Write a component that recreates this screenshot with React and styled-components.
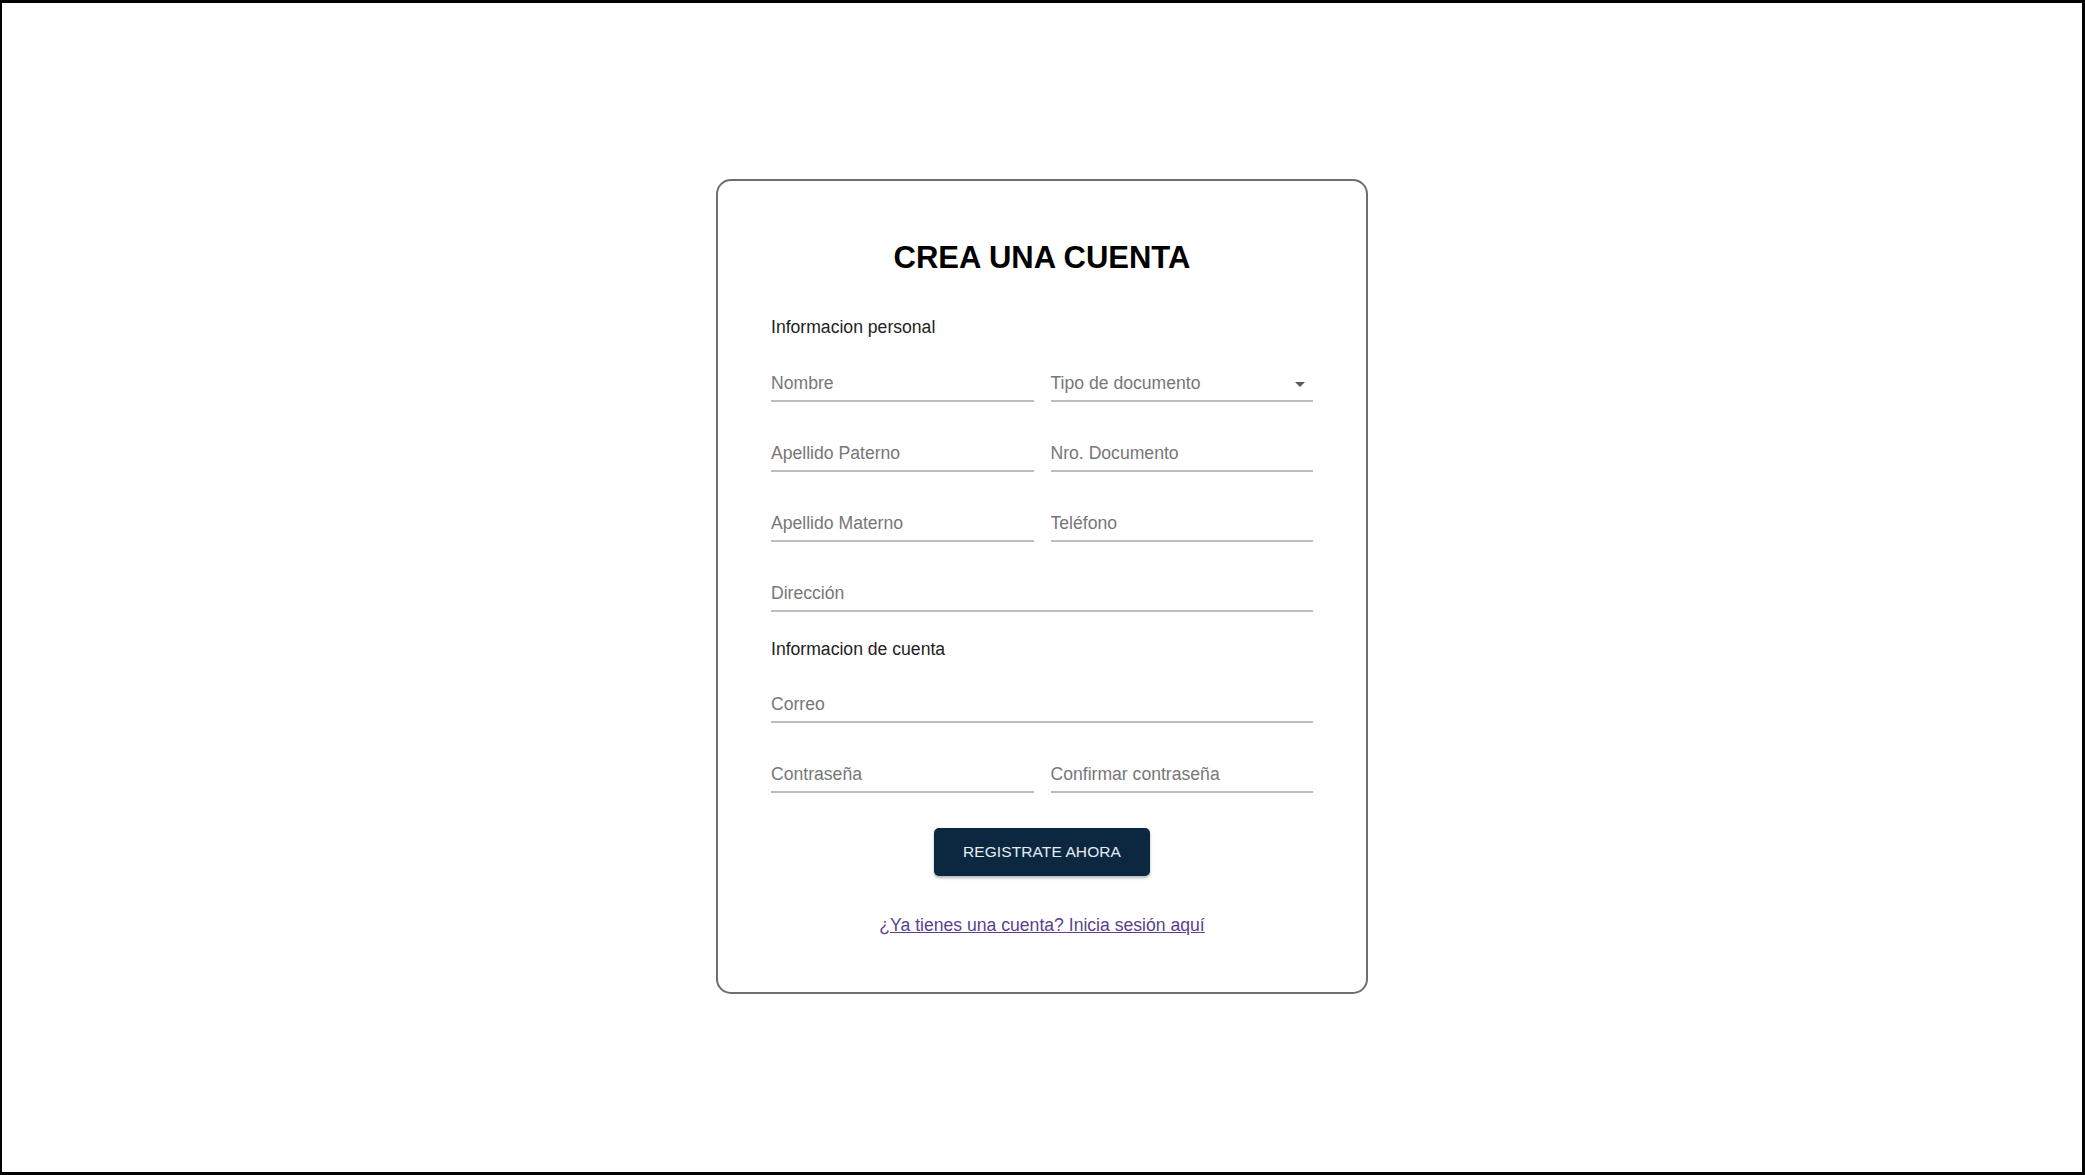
import React from "react";
import styled, { createGlobalStyle } from "styled-components";

const GlobalStyle = createGlobalStyle`
  * {
    box-sizing: border-box;
  }
  html, body {
    margin: 0;
    padding: 0;
    background: #fff;
    font-family: "Liberation Sans", Arial, sans-serif;
  }
`;

const Page = styled.div`
  width: 100%;
  height: 100vh;
  border: 3px solid #000;
  border-left-width: 2px;
  padding-bottom: 2px;
  display: flex;
  justify-content: center;
  align-items: center;
  background: #fff;
`;

const Card = styled.form`
  width: 652px;
  border: 2px solid #6e6e6e;
  border-radius: 15px;
  padding: 59px 53px 55px;
  display: flex;
  flex-direction: column;
  background: #fff;
`;

const Title = styled.h1`
  margin: 0;
  font-size: 31px;
  line-height: 36px;
  font-weight: 700;
  color: #000;
  text-align: center;
`;

const Section = styled.div`
  font-size: 17.6px;
  line-height: 24px;
  color: #222;
  margin-top: ${props => props.$top}px;
`;

const Row = styled.div`
  display: grid;
  grid-template-columns: ${props => (props.$single ? "1fr" : "1fr 1fr")};
  column-gap: 17px;
  margin-top: ${props => props.$top}px;
`;

const Input = styled.input`
  width: 100%;
  height: 31px;
  padding: 0 0 5px;
  border: none;
  border-bottom: 2px solid #bdbdbd;
  outline: none;
  background: transparent;
  font-family: inherit;
  font-size: 17.6px;
  line-height: 24px;
  color: #333;

  &::placeholder {
    color: #777;
    opacity: 1;
  }
`;

const Select = styled.div`
  height: 31px;
  padding: 0 8px 5px 0;
  border-bottom: 2px solid #bdbdbd;
  display: flex;
  align-items: center;
  justify-content: space-between;
  font-size: 17.6px;
  line-height: 24px;
  color: #777;
  cursor: pointer;
`;

const Arrow = styled.svg`
  width: 10px;
  height: 5px;
  margin-top: 2px;
  fill: #5a5a5a;
`;

const Actions = styled.div`
  display: flex;
  flex-direction: column;
  align-items: center;
  margin-top: 35px;
`;

const Button = styled.button`
  width: 216px;
  height: 48px;
  border: none;
  border-radius: 5px;
  background: #0c2840;
  color: #e6edf3;
  font-family: inherit;
  font-size: 15.5px;
  letter-spacing: 0.1px;
  text-transform: uppercase;
  box-shadow: 0 2px 3px rgba(0, 0, 0, 0.3);
  cursor: pointer;
`;

const Link = styled.a`
  margin-top: 37px;
  font-size: 17.6px;
  line-height: 24px;
  color: #5b3f8f;
  text-decoration: underline;
  cursor: pointer;
`;

const fields = [
  ["Apellido Paterno", "Nro. Documento"],
  ["Apellido Materno", "Teléfono"]
];

export default function App() {
  return (
    <>
      <GlobalStyle />
      <Page>
        <Card onSubmit={e => e.preventDefault()}>
          <Title>CREA UNA CUENTA</Title>

          <Section $top={39}>Informacion personal</Section>
          <Row $top={32}>
            <Input placeholder="Nombre" />
            <Select>
              <span>Tipo de documento</span>
              <Arrow viewBox="0 0 10 5">
                <path d="M0 0l5 5 5-5z" />
              </Arrow>
            </Select>
          </Row>
          {fields.map(([a, b]) => (
            <Row key={a} $top={39}>
              <Input placeholder={a} />
              <Input placeholder={b} />
            </Row>
          ))}
          <Row $single $top={39}>
            <Input placeholder="Dirección" />
          </Row>

          <Section $top={25}>Informacion de cuenta</Section>
          <Row $single $top={31}>
            <Input type="email" placeholder="Correo" />
          </Row>
          <Row $top={39}>
            <Input type="password" placeholder="Contraseña" />
            <Input type="password" placeholder="Confirmar contraseña" />
          </Row>

          <Actions>
            <Button type="submit">Registrate ahora</Button>
            <Link>¿Ya tienes una cuenta? Inicia sesión aquí</Link>
          </Actions>
        </Card>
      </Page>
    </>
  );
}
